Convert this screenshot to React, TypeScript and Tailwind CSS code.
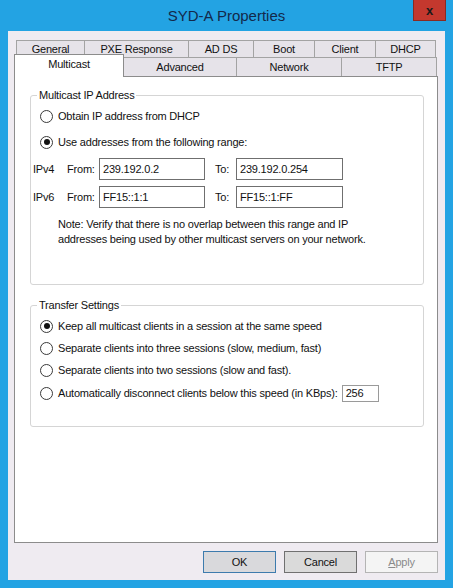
import React from 'react';

const font = { fontFamily: '"Liberation Sans", Arial, sans-serif' };

function Radio({ checked, label }: { checked?: boolean; label: React.ReactNode }) {
  return (
    <div className="flex h-[14px] items-center">
      <span className="flex h-[13px] w-[13px] shrink-0 items-center justify-center rounded-full border border-[#3a3a3a] bg-white">
        {checked && <span className="h-[6px] w-[6px] rounded-full bg-[#111]" />}
      </span>
      <span className="ml-[5px] whitespace-nowrap">{label}</span>
    </div>
  );
}

function Field({ value, className }: { value: string; className: string }) {
  return (
    <div className={`flex items-center border border-[#6f6f6f] bg-white pl-[3px] ${className}`}>{value}</div>
  );
}

function Group({ title, className, children }: { title: string; className: string; children: React.ReactNode }) {
  return (
    <fieldset className={`rounded-[3px] border border-[#d5d5d5] ${className}`}>
      <legend className="ml-[6px] px-[2px] leading-[13px]">{title}</legend>
      {children}
    </fieldset>
  );
}

const backRow = [
  { label: 'General', w: 'w-[69px]' },
  { label: 'PXE Response', w: 'w-[105px]' },
  { label: 'AD DS', w: 'w-[66px]' },
  { label: 'Boot', w: 'w-[62px]' },
  { label: 'Client', w: 'w-[62px]' },
  { label: 'DHCP', w: 'w-[61px]' },
];

const frontRow = [
  { label: 'Advanced', w: 'w-[114px]' },
  { label: 'Network', w: 'w-[106px]' },
  { label: 'TFTP', w: 'w-[96px]' },
];

export default function App() {
  return (
    <div
      className="flex h-[588px] w-[453px] flex-col bg-[#23a3e3] text-[11px] leading-[13px] tracking-[-0.2px] text-[#111]"
      style={font}
    >
      {/* title bar */}
      <div className="relative flex h-[31px] shrink-0 items-center justify-center">
        <span className="text-[15px] tracking-normal text-[#13294a]">SYD-A Properties</span>
        <div className="absolute right-[7px] top-0 flex h-[21px] w-[33px] items-center justify-center border border-t-0 border-[#8a2a22] bg-[#c4382e] text-[13px] font-bold text-[#1a1a1a]">
          x
        </div>
      </div>

      {/* client area */}
      <div className="mx-[8px] mb-[8px] flex flex-1 flex-col bg-[#efebf1]">
        <div className="pl-[6px] pr-[7px] pt-[9px]">
          <div className="ml-[2px] flex h-[17px]">
            {backRow.map((t) => (
              <div
                key={t.label}
                className={`-ml-px flex items-center justify-center border border-b-0 border-[#a3a3a3] bg-[#e6e3e9] pt-px first:ml-0 ${t.w}`}
              >
                {t.label}
              </div>
            ))}
          </div>
          <div className="-mt-[2px] flex h-[21px] items-end">
            <div className="relative z-10 -mb-px flex h-[23px] w-[110px] items-start justify-center border border-b-0 border-[#8c8c8c] bg-white pt-[3px]">
              Multicast
            </div>
            {frontRow.map((t) => (
              <div
                key={t.label}
                className={`-ml-px flex h-[19px] items-center justify-center border border-b-0 border-[#a3a3a3] bg-[#e6e3e9] pt-px ${t.w}`}
              >
                {t.label}
              </div>
            ))}
          </div>
          <div className="h-[467px] w-[424px] border border-[#8c8c8c] bg-white pl-[15px] pt-[12px]">
            <Group title="Multicast IP Address" className="h-[196px] w-[394px]">
              <div className="flex flex-col pl-[9px] pt-[7px]">
                <Radio label="Obtain IP address from DHCP" />
                <div className="mt-[12px]">
                  <Radio checked label="Use addresses from the following range:" />
                </div>
              </div>
              <div className="mt-[9px] flex flex-col gap-[6px] pl-[2px]">
                <div className="flex items-center">
                  <span className="w-[34px]">IPv4</span>
                  <span className="w-[32px]">From:</span>
                  <Field value="239.192.0.2" className="h-[22px] w-[106px]" />
                  <span className="ml-[10px] w-[21px]">To:</span>
                  <Field value="239.192.0.254" className="h-[22px] w-[107px]" />
                </div>
                <div className="flex items-center">
                  <span className="w-[34px]">IPv6</span>
                  <span className="w-[32px]">From:</span>
                  <Field value="FF15::1:1" className="h-[22px] w-[106px]" />
                  <span className="ml-[10px] w-[21px]">To:</span>
                  <Field value="FF15::1:FF" className="h-[22px] w-[107px]" />
                </div>
              </div>
              <p className="mt-[9px] pl-[27px] leading-[15px]">
                Note: Verify that there is no overlap between this range and IP
                <br />
                addresses being used by other multicast servers on your network.
              </p>
            </Group>

            <Group title="Transfer Settings" className="mt-[14px] h-[128px] w-[394px]">
              <div className="flex flex-col gap-[8px] pl-[9px] pt-[7px]">
                <Radio checked label="Keep all multicast clients in a session at the same speed" />
                <Radio label="Separate clients into three sessions (slow, medium, fast)" />
                <Radio label="Separate clients into two sessions (slow and fast)." />
                <div className="flex items-center">
                  <Radio label="Automatically disconnect clients below this speed (in KBps):" />
                  <Field value="256" className="ml-[4px] h-[17px] w-[37px] border-[#9a9a9a]" />
                </div>
              </div>
            </Group>
          </div>
        </div>

        <div className="mt-[8px] flex justify-end gap-[8px] pr-[7px]">
          <div className="flex h-[22px] w-[73px] items-center justify-center border border-[#3d7bad] bg-[#d9d9dc]">
            OK
          </div>
          <div className="flex h-[22px] w-[73px] items-center justify-center border border-[#707070] bg-[#dadada]">
            Cancel
          </div>
          <div className="flex h-[22px] w-[73px] items-center justify-center border border-[#b4b4b4] bg-[#f4f4f4] text-[#8a8a8a]">
            <span className="underline">A</span>pply
          </div>
        </div>
      </div>
    </div>
  );
}
